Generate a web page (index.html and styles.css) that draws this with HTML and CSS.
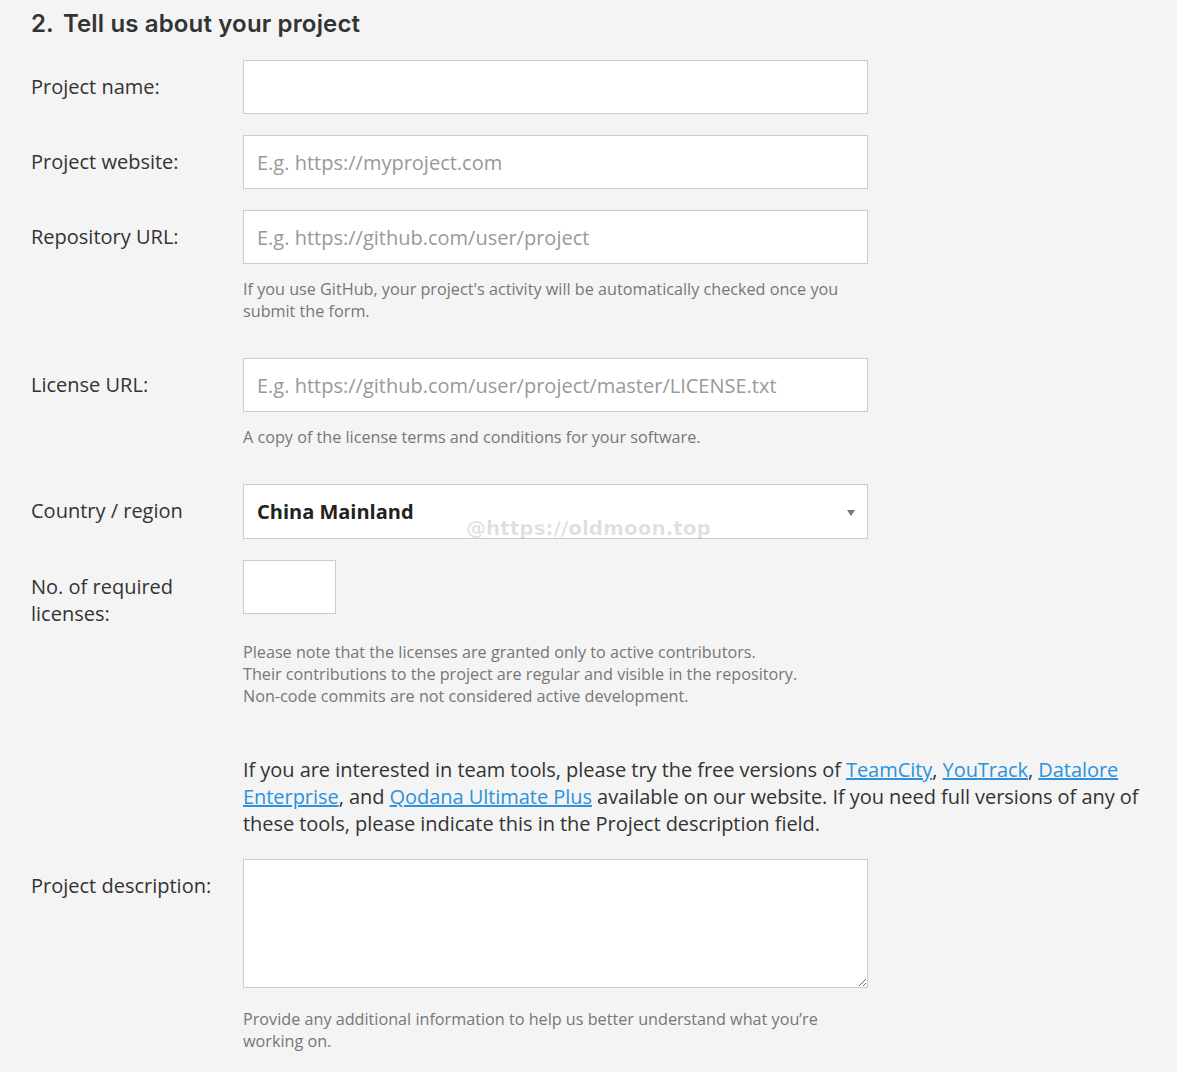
FILE: index.html
```html
<!DOCTYPE html>
<html lang="en">
<head>
<meta charset="utf-8">
<title>Tell us about your project</title>
<link rel="stylesheet" href="styles.css">
</head>
<body>
<main class="page">
  <h2 class="title"><span class="num">2.</span>Tell us about your project</h2>

  <div class="row">
    <label class="label" for="pname">Project name:</label>
    <div class="field"><input class="input" id="pname" type="text"></div>
  </div>

  <div class="row">
    <label class="label" for="pweb">Project website:</label>
    <div class="field"><input class="input" id="pweb" type="text" placeholder="E.g. https://myproject.com"></div>
  </div>

  <div class="row">
    <label class="label" for="prepo">Repository URL:</label>
    <div class="field">
      <input class="input" id="prepo" type="text" placeholder="E.g. https://github.com/user/project">
      <p class="hint">If you use GitHub, your project's activity will be automatically checked once you submit the form.</p>
    </div>
  </div>

  <div class="row">
    <label class="label" for="plic">License URL:</label>
    <div class="field">
      <input class="input" id="plic" type="text" placeholder="E.g. https://github.com/user/project/master/LICENSE.txt">
      <p class="hint">A copy of the license terms and conditions for your software.</p>
    </div>
  </div>

  <div class="row">
    <label class="label" for="pcountry">Country / region</label>
    <div class="field">
      <div class="select" id="pcountry">
        <span class="select-value">China Mainland</span>
        <span class="select-arrow"></span>
      </div>
    </div>
  </div>

  <div class="row">
    <label class="label" for="pnum">No. of required<br>licenses:</label>
    <div class="field"><input class="input input-small" id="pnum" type="text"></div>
    <p class="hint hint-wide">Please note that the licenses are granted only to active contributors.<br>Their contributions to the project are regular and visible in the repository.<br>Non-code commits are not considered active development.</p>
  </div>

  <div class="row">
    <div class="label"></div>
    <p class="notice">If you are interested in team tools, please try the free versions of <a href="#">TeamCity</a>, <a href="#">YouTrack</a>, <a href="#">Datalore Enterprise</a>, and <a href="#">Qodana Ultimate Plus</a> available on our website. If you need full versions of any of these tools, please indicate this in the Project description field.</p>
  </div>

  <div class="row row-last">
    <label class="label" for="pdesc">Project description:</label>
    <div class="field">
      <textarea class="textarea" id="pdesc"></textarea>
      <p class="hint hint-after-area">Provide any additional information to help us better understand what you’re working on.</p>
    </div>
  </div>

  <div class="watermark">@https://oldmoon.top</div>
</main>
</body>
</html>
```

FILE: styles.css
```css
html, body {
  margin: 0;
  padding: 0;
  background: #f4f4f4;
}

body {
  font-family: "Open Sans", "Liberation Sans", sans-serif;
  color: #333;
}

.page {
  position: relative;
  padding: 0 31px 0 31px;
}

.title {
  margin: 0;
  padding-top: 9px;
  height: 60px;
  box-sizing: border-box;
  font-family: Inter, "Noto Sans", sans-serif;
  font-weight: 600;
  font-size: 24px;
  line-height: 30px;
  color: #333;
  letter-spacing: 0.15px;
}

.num {
  margin-right: 9px;
}

.row {
  display: grid;
  grid-template-columns: 212px 625px;
  margin-bottom: 21px;
}

.row-last {
  margin-bottom: 0;
}

.label {
  padding-top: 13px;
  font-size: 20px;
  line-height: 27px;
  color: #333;
}

.field {
  min-width: 0;
}

.input {
  display: block;
  box-sizing: border-box;
  width: 625px;
  height: 54px;
  margin: 0;
  padding: 0 13px;
  border: 1px solid #cccccc;
  border-radius: 0;
  background: #fff;
  font-family: "Open Sans", "Liberation Sans", sans-serif;
  font-size: 20px;
  color: #333;
  outline: none;
}

.input::placeholder {
  color: #999;
}

.input-small {
  width: 93px;
}

.hint {
  margin: 14px 0 15px 0;
  font-size: 16.2px;
  line-height: 22px;
  color: #777;
}

.hint-wide {
  grid-column: 2;
}

.hint-after-area {
  margin: 20px 0 0 0;
}

.select {
  box-sizing: border-box;
  width: 625px;
  height: 55px;
  display: flex;
  align-items: center;
  justify-content: space-between;
  padding: 0 12px 0 13px;
  border: 1px solid #cccccc;
  background: #fff;
}

.select-value {
  font-size: 20px;
  font-weight: 700;
  color: #222;
}

.select-arrow {
  width: 0;
  height: 0;
  border-left: 4px solid transparent;
  border-right: 4px solid transparent;
  border-top: 6px solid #777;
  margin-top: 3px;
}

.notice {
  margin: 13px 0 1px 0;
  width: 905px;
  font-size: 20px;
  line-height: 27px;
  color: #333;
  letter-spacing: -0.05px;
}

.notice a {
  color: #2b92de;
  text-decoration: underline;
}

.textarea {
  display: block;
  box-sizing: border-box;
  width: 625px;
  height: 129px;
  margin: 0;
  padding: 10px 13px;
  border: 1px solid #cccccc;
  border-radius: 0;
  background: #fff;
  font-family: "Open Sans", "Liberation Sans", sans-serif;
  font-size: 20px;
  resize: vertical;
  outline: none;
}

.watermark {
  position: absolute;
  left: 466px;
  top: 516px;
  font-family: "DejaVu Sans", sans-serif;
  font-weight: 700;
  font-size: 20px;
  color: rgba(0, 0, 0, 0.13);
  pointer-events: none;
}
```
